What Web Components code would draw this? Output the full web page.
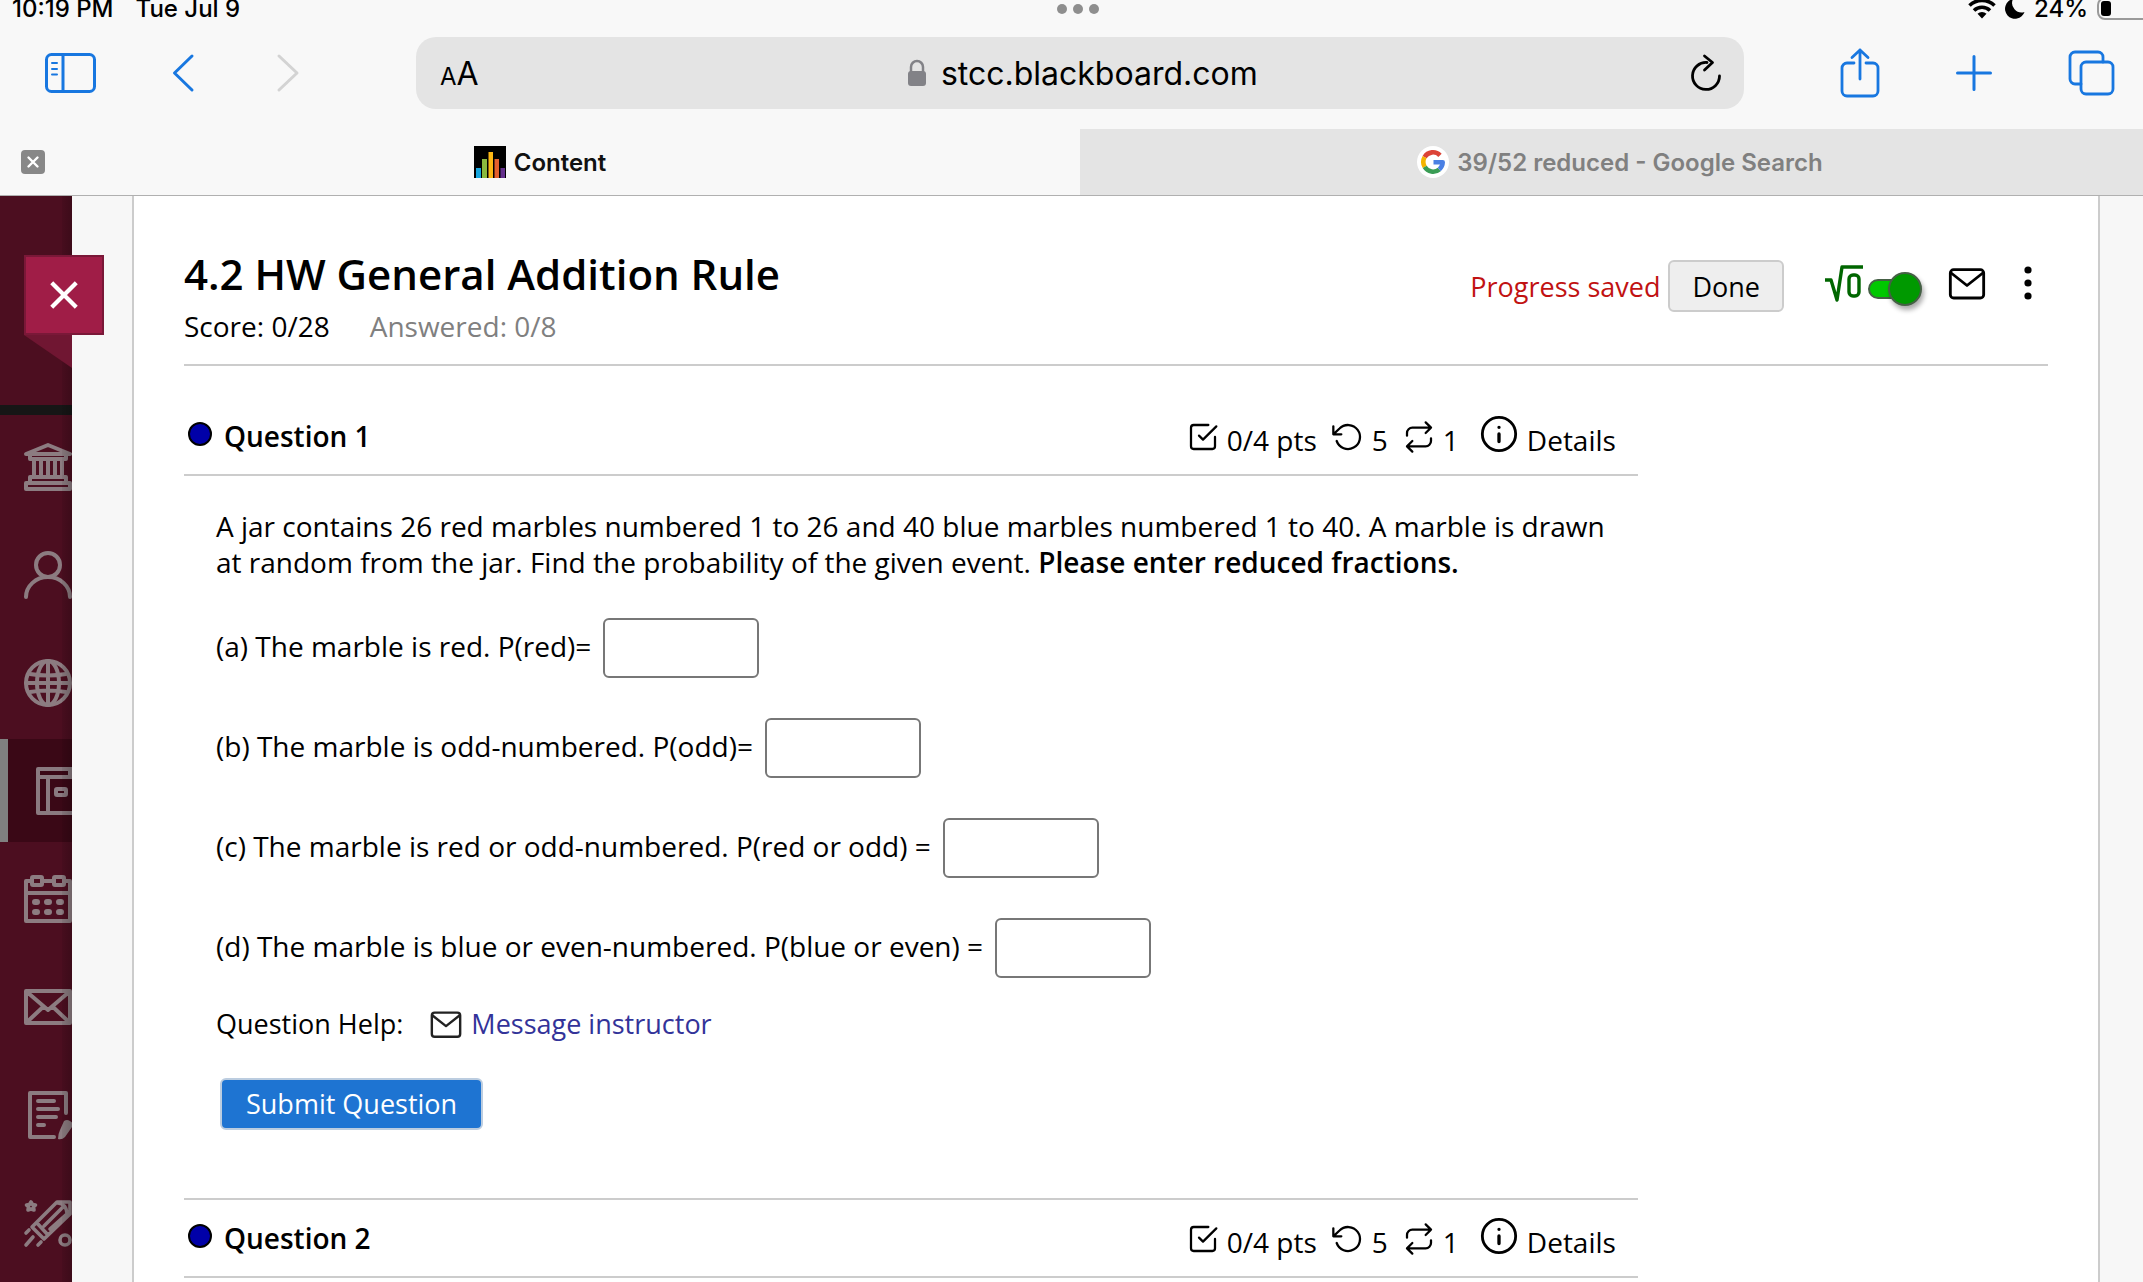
<!DOCTYPE html>
<html lang="en">
<head>
<meta charset="utf-8">
<title>Content</title>
<style>
  html, body { height: 100%; }
  body { margin: 0; overflow: hidden; background: #f7f7f7; font-family: "Open Sans", "Noto Sans", sans-serif; color: #000; }
</style>
</head>
<body>
<course-app></course-app>

<script>
const define = (name, html, setup) => {
  const tpl = document.createElement('template');
  tpl.innerHTML = `<style>*,*::before{box-sizing:border-box}button{font:inherit;color:inherit;border:0;background:none;padding:0;cursor:pointer}</style>` + html;
  customElements.define(name, class extends HTMLElement {
    constructor() {
      super();
      this.attachShadow({ mode: 'open' }).append(tpl.content.cloneNode(true));
    }
    connectedCallback() { if (setup) setup(this, this.shadowRoot); }
  });
};

/* Icons: viewBox + drawing, sized by the host's width and height */
const ICONS = {
  sidebar: ['0 0 52 40', '<g stroke-width="3"><rect x="1.5" y="1.5" width="48" height="37" rx="5"/><path d="M18 2v36"/><path stroke-width="2" d="M7 10h5M7 16h5M7 21.500h5"/></g>'],
  back: ['0 0 28 40', '<path stroke-width="3" d="M19 3 1.500 20 19 37"/>'],
  forward: ['0 0 28 40', '<path stroke-width="3" d="M2 3l18 17L2 37"/>'],
  lock: ['0 0 20 28', '<path stroke-width="2.500" d="M4 13V8a6 6 0 0 1 12 0v5"/><rect x="1" y="12" width="18" height="15" rx="3" fill="currentColor" stroke="none"/>'],
  reload: ['0 0 32 38', '<path stroke-width="2.800" d="M17 8.500A13.500 13.500 0 1 0 29.500 22"/><path stroke-width="2.800" d="M14.500 2l8 6.500-8 7.500"/>'],
  share: ['0 0 40 50', '<g stroke-width="2.800"><path d="M14 15H7a5 5 0 0 0-5 5v23a5 5 0 0 0 5 5h26a5 5 0 0 0 5-5V20a5 5 0 0 0-5-5h-7"/><path d="M20 31V2M12 9.500 20 2l8 7.500"/></g>'],
  plus: ['0 0 36 36', '<path stroke-width="3" d="M18 1.500v33M1.500 18h33"/>'],
  tabs: ['0 0 48 46', '<g stroke-width="2.800"><rect x="13" y="12" width="32" height="32" rx="5"/><path d="M13 34H7a5 5 0 0 1-5-5V7a5 5 0 0 1 5-5h23a5 5 0 0 1 5 5v5"/></g>'],
  wifi: ['0 0 28 20', '<g stroke-width="3.600" stroke-linecap="butt"><path d="M1.500 6.500a18 18 0 0 1 25 0"/><path d="M6 11.500a11.500 11.500 0 0 1 16 0"/></g><path fill="currentColor" stroke="none" d="M9.500 14.800a6.500 6.500 0 0 1 9 0L14 19.500z"/>'],
  moon: ['0 0 20 20', '<path fill="currentColor" stroke="none" d="M8 0A10 10 0 1 0 19.500 13 9.500 9.500 0 0 1 8 0z"/>'],
  battery: ['0 0 56 24', '<rect x="1" y="1" width="52" height="21" rx="7" stroke="#9a9a9a" stroke-width="2"/><rect x="4" y="4" width="10" height="15" rx="3" fill="#000" stroke="none"/>'],
  close: ['0 0 24 24', '<path stroke-width="2.400" d="M7.500 7.500l9 9m0-9l-9 9"/>'],
  cross: ['0 0 32 32', '<path stroke-width="4.500" stroke-linecap="square" d="M4.500 4.500l23 23m0-23l-23 23"/>'],
  chart: ['0 0 32 32', '<g stroke="none"><path fill="#000" d="M0 0h32v32H0z"/><path fill="#16a6de" d="M2 22h5v10H2z"/><path fill="#8ab93f" d="M8 13h5v19H8z"/><path fill="#fdb714" d="M14.500 6H19v26h-4.500z"/><path fill="#e5602c" d="M20.500 13H25v19h-4.500z"/><path fill="#64308c" d="M26.500 22H31v10h-4.500z"/></g>'],
  google: ['0 0 32 32', '<circle cx="16" cy="16" r="16" fill="#fff" stroke="none"/><g stroke-width="4.600" stroke-linecap="butt"><path stroke="#dc4437" d="M7.600 11.200A9.700 9.700 0 0 1 23 9.300"/><path stroke="#f4b400" d="M7.700 20.900a9.700 9.700 0 0 1-.1-9.700"/><path stroke="#3a9d55" d="M22.300 23.400A9.700 9.700 0 0 1 7.700 20.900"/><path stroke="#4a80e4" d="M16.500 16.300h9.200a9.700 9.700 0 0 1-3.400 7.100"/></g>'],
  bank: ['0 0 48 48', '<g stroke-width="4"><path d="M2 11 24 2l22 9v0H2z"/><path d="M6 12v4h36v-4M10 16v16M17 18v14M24 18v14M31 18v14M38 16v16M6 38v-4h36v4"/><rect x="2" y="40" width="44" height="6"/></g>'],
  user: ['0 0 48 48', '<g stroke-width="4"><circle cx="24" cy="14" r="12"/><path d="M2 46a22 20 0 0 1 44 0"/></g>'],
  globe: ['0 0 48 48', '<g stroke-width="4"><circle cx="24" cy="24" r="22"/><ellipse cx="24" cy="24" rx="11" ry="22"/><path d="M24 2v44M2 24h44M6 15q18 3 36 0M6 33q18-3 36 0"/></g>'],
  courses: ['0 0 48 48', '<g stroke-width="4"><rect x="2" y="2" width="44" height="44"/><path d="M2 10h32V2M12 10v36M34 10h12"/><rect x="20" y="22" width="10" height="6" rx="1"/></g>'],
  calendar: ['0 0 48 48', '<g stroke-width="4"><path d="M8 6H2v40h44V6h-6M18 6h12M2 18h44"/><rect x="8" y="2" width="10" height="8" rx="1"/><rect x="30" y="2" width="10" height="8" rx="1"/></g><path stroke-width="6" d="M11 27h2m10 0h2m10 0h2M11 37h2m10 0h2m10 0h2"/>'],
  envelope: ['0 0 48 48', '<g stroke-width="4"><path d="M2 8h44v32H2zM3 9l21 18L45 9M3 39l16-15M45 39 29 24"/></g>'],
  grades: ['0 0 48 48', '<g stroke-width="4"><path d="M42 22V2H6v44h24M14 10h16M14 18h20M14 26h18M14 34h6"/></g><path fill="currentColor" stroke="none" d="M40 30q3-2 6 0l4 3-9 13q-3 3-7 2 0-5 2-9z"/>'],
  tools: ['0 0 48 48', '<g stroke-width="3.600"><path d="M8 28 33 3h13v12L20 40zM13 24l11 12M20 27 38 9M26 30 44 14M34 4q8 1 9 10M2 34l3-3M2 46l7-8M14 46l3-3"/><circle cx="41" cy="41" r="5"/><path d="M7 3l1.500 2.500 3 .5-2 2 .5 3-3-1-3 1 .5-3-2-2 3-.5z"/></g>'],
  mail: ['0 0 24 24', '<rect x="2" y="4" width="20" height="17" rx="2"/><path d="M2.500 6 12 13.500 21.500 6"/>'],
  check: ['0 0 24 24', '<path d="m9 11 3 3L22 4M21 12v7a2 2 0 0 1-2 2H5a2 2 0 0 1-2-2V5a2 2 0 0 1 2-2h11"/>'],
  undo: ['0 0 24 24', '<path d="M1 4v6h6M3.510 15a9 9 0 1 0 2.130-9.360L1 10"/>'],
  repeat: ['0 0 24 24', '<path d="m17 1 4 4-4 4M3 11V9a4 4 0 0 1 4-4h14M7 23l-4-4 4-4M21 13v2a4 4 0 0 1-4 4H3"/>'],
  info: ['0 0 24 24', '<circle cx="12" cy="12" r="10"/><path stroke-width="2" d="M12 16.500V12M12 8h.010"/>'],
  root: ['0 0 40 40', '<g stroke-width="3.400"><path stroke-linecap="butt" d="M1 17h6l6 20L18 4h21"/><rect x="25" y="12" width="10" height="21" rx="4"/></g>'],
  kebab: ['0 0 12 40', '<g fill="currentColor" stroke="none"><circle cx="6" cy="7" r="3.600"/><circle cx="6" cy="20" r="3.600"/><circle cx="6" cy="33" r="3.600"/></g>']
};
define('ui-icon', `
<style>:host{display:block;flex:none}svg{display:block;width:100%;height:100%;overflow:visible}</style>
<svg fill="none" stroke="currentColor" stroke-width="1.7" stroke-linecap="round" stroke-linejoin="round" aria-hidden="true"></svg>`,
(host, root) => {
  const [box, art] = ICONS[host.getAttribute('name')];
  const svg = root.querySelector('svg');
  svg.setAttribute('viewBox', box);
  svg.innerHTML = art;
});

define('status-bar', `
<style>
  :host{display:grid;grid-template-columns:1fr auto 1fr;grid-template-rows:18px;align-items:center;padding-left:12px;font-size:24px;line-height:18px;font-weight:500}
  .left{display:flex;gap:22px}
  .dots{display:flex;gap:6px}
  .dots i{width:10px;height:10px;border-radius:50%;background:#8e8e8e}
  .right{display:flex;justify-content:flex-end;align-items:center;gap:9px}
  .wifi{width:28px;height:20px}.moon{width:20px;height:20px}.bat{width:46px;height:24px;overflow:hidden}
  .bat ui-icon{width:56px;height:24px}
</style>
<div class="left"><span>10:19 PM</span><span>Tue Jul 9</span></div>
<div class="dots"><i></i><i></i><i></i></div>
<div class="right"><ui-icon class="wifi" name="wifi"></ui-icon><ui-icon class="moon" name="moon"></ui-icon><span>24%</span><div class="bat"><ui-icon name="battery"></ui-icon></div></div>`);

define('tool-bar', `
<style>
  :host{display:flex;align-items:center;padding:19px 27px 20px 45px;color:#1877e0}
  .group{display:flex;align-items:center;gap:76px}
  .side ui-icon{width:52px;height:40px}.nav ui-icon{width:28px;height:40px}
  .off{color:#d3d3d3}
  .url{flex:1;display:flex;align-items:center;justify-content:space-between;height:72px;margin:0 96px 0 111px;padding:0 22px 0 24px;border-radius:20px;background:#e4e4e4;color:#000}
  .aa{font-size:32px}.aa small{font-size:24px}
  .host{display:flex;align-items:center;gap:14px;padding-right:4px;font-size:32px}
  .host ui-icon{width:20px;height:28px;color:#828287}
  .reload{width:32px;height:38px}
  .share ui-icon{width:40px;height:50px}.plus ui-icon{width:36px;height:36px}.tabs ui-icon{width:48px;height:46px}
</style>
<div class="group">
  <button class="side" aria-label="Sidebar"><ui-icon name="sidebar"></ui-icon></button>
  <button class="nav" aria-label="Back"><ui-icon name="back"></ui-icon></button>
  <button class="nav off" aria-label="Forward"><ui-icon name="forward"></ui-icon></button>
</div>
<div class="url">
  <button class="aa"><small>A</small>A</button>
  <button class="host"><ui-icon name="lock"></ui-icon><span>stcc.blackboard.com</span></button>
  <button aria-label="Reload"><ui-icon class="reload" name="reload"></ui-icon></button>
</div>
<div class="group">
  <button class="share" aria-label="Share"><ui-icon name="share"></ui-icon></button>
  <button class="plus" aria-label="New tab"><ui-icon name="plus"></ui-icon></button>
  <button class="tabs" aria-label="Tabs"><ui-icon name="tabs"></ui-icon></button>
</div>`);

define('browser-tab', `
<style>
  :host{display:flex;flex:1;align-items:center;height:66px;padding:0 21px;background:#e4e4e4;color:#808080;font-size:24px;font-weight:600}
  :host([active]){background:#f8f8f8;color:#111}
  .x{display:none;width:24px;height:24px;border-radius:4px;background:#888;color:#fff}
  :host([active]) .x{display:block}
  .x ui-icon{width:24px;height:24px}
  .name{flex:1;display:flex;align-items:center;justify-content:center;gap:8px}
  .name ui-icon{width:32px;height:32px}
  :host([active]) .name{padding-right:24px}
</style>
<button class="x" aria-label="Close tab"><ui-icon name="close"></ui-icon></button>
<button class="name"><slot></slot></button>`,
(host, root) => {
  const icon = document.createElement('ui-icon');
  icon.setAttribute('name', host.getAttribute('icon'));
  root.querySelector('.name').prepend(icon);
});

define('browser-chrome', `
<style>
  :host{display:block;background:#f8f8f8;border-bottom:1px solid #b0b0b0;font-family:Inter,sans-serif;color:#000}
  .strip{display:flex;margin-right:-17px}
</style>
<status-bar></status-bar>
<tool-bar></tool-bar>
<div class="strip">
  <browser-tab icon="chart" active>Content</browser-tab>
  <browser-tab icon="google">39/52 reduced - Google Search</browser-tab>
</div>`);

define('course-sidebar', `
<style>
  :host{display:block;position:relative;z-index:1;width:72px;flex:none;background:#4c0e20}
  .clip{height:100%;overflow:hidden}
  .brand{height:219px;border-bottom:10px solid #161616}
  nav{display:flex;flex-direction:column;gap:5px}
  nav a{display:flex;align-items:center;flex:none;height:103px;padding-left:24px;color:#8c7c81}
  nav a.on{background:#3a0816;border-left:8px solid #808080;padding-left:28px;color:#8a7a80}
  nav ui-icon{width:48px;height:48px}
  .shade{position:absolute;top:0;right:0;bottom:0;width:10px;background:linear-gradient(90deg,#0001,#0003)}
  .fold{position:absolute;left:24px;top:139px;width:48px;height:33px;background:#701632;clip-path:polygon(0 0,100% 0,100% 100%)}
  .close{position:absolute;left:24px;top:59px;width:80px;height:80px;background:#a01d47;border:2px solid #7a1838;color:#fff;display:grid;place-items:center}
  .close ui-icon{width:30px;height:30px}
</style>
<div class="clip">
  <div class="brand"></div>
  <nav>
    <a href="#" aria-label="Institution"><ui-icon name="bank"></ui-icon></a>
    <a href="#" aria-label="Profile"><ui-icon name="user"></ui-icon></a>
    <a href="#" aria-label="Activity"><ui-icon name="globe"></ui-icon></a>
    <a href="#" aria-label="Courses" class="on"><ui-icon name="courses"></ui-icon></a>
    <a href="#" aria-label="Calendar"><ui-icon name="calendar"></ui-icon></a>
    <a href="#" aria-label="Messages"><ui-icon name="envelope"></ui-icon></a>
    <a href="#" aria-label="Grades"><ui-icon name="grades"></ui-icon></a>
    <a href="#" aria-label="Tools"><ui-icon name="tools"></ui-icon></a>
  </nav>
</div>
<div class="shade"></div>
<div class="fold"></div>
<button class="close" aria-label="Close"><ui-icon name="cross"></ui-icon></button>`);

define('toggle-switch', `
<style>
  :host{display:flex}
  input{appearance:none;margin:0;width:44px;height:20px;border:2px solid #456045;border-radius:10px;background:#00c800;display:flex;align-items:center;justify-content:flex-end}
  input::before{content:"";flex:none;width:34px;height:34px;margin-right:-12px;border:2px solid #456045;border-radius:50%;background:#090;box-shadow:2px 4px 5px #0005}
</style>
<input type="checkbox" checked aria-label="Equation editor">`);

define('assessment-header', `
<style>
  :host{display:flex;justify-content:space-between;align-items:flex-start;padding:52px 0 20px;border-bottom:2px solid #ccc}
  h1{margin:0 0 8px;font-size:42px;line-height:52px;font-weight:600}
  .score{display:flex;gap:40px;font-size:28px;line-height:36px}
  .muted{color:#808080}
  .tools{display:flex;align-items:center;padding:12px 14px 0 0;font-size:27px}
  .saved{color:#c11212;margin-right:8px}
  .done{height:52px;padding:0 22px;border:2px solid #ccc;border-radius:6px;background:#eee}
  .root{width:40px;height:40px;margin:0 4px 6px 40px;color:#060}
  toggle-switch{padding-top:6px}
  .mail{width:40px;height:40px}
  .mailb{margin:0 35px 6px 35px}
  .more{margin-bottom:6px}
  .kebab{width:12px;height:40px}
</style>
<div>
  <h1>4.2 HW General Addition Rule</h1>
  <div class="score"><span>Score: 0/28</span><span class="muted">Answered: 0/8</span></div>
</div>
<div class="tools">
  <span class="saved">Progress saved</span>
  <button class="done">Done</button>
  <ui-icon class="root" name="root"></ui-icon>
  <toggle-switch></toggle-switch>
  <button class="mailb" aria-label="Message"><ui-icon class="mail" name="mail"></ui-icon></button>
  <button class="more" aria-label="More"><ui-icon class="kebab" name="kebab"></ui-icon></button>
</div>`);

define('question-card', `
<style>
  :host{display:block}
  header{display:flex;justify-content:space-between;align-items:center;height:78px;padding:0 22px 4px 4px;border-bottom:2px solid #ccc;font-size:28px;line-height:36px}
  .t,.meta{display:flex;align-items:center}
  .dot{width:24px;height:24px;border:2px solid #000;border-radius:50%;background:#0000a8;margin-right:12px}
  h2{margin:0;padding-top:4px;font-size:28px;line-height:32px;font-weight:600}
  .meta span{padding-top:12px}
  .meta ui-icon{width:32px;height:32px;margin:6px 8px 0 15px}
  .meta .info{width:40px;height:40px;margin:0}
  .details{display:flex;align-items:center;gap:8px;margin-left:20px}
</style>
<header>
  <div class="t"><i class="dot"></i><h2><slot name="title"></slot></h2></div>
  <div class="meta">
    <ui-icon name="check"></ui-icon><span>0/4 pts</span>
    <ui-icon name="undo"></ui-icon><span>5</span>
    <ui-icon name="repeat"></ui-icon><span>1</span>
    <button class="details"><ui-icon class="info" name="info"></ui-icon><span>Details</span></button>
  </div>
</header>
<slot></slot>`);

define('answer-field', `
<style>
  :host{display:flex;align-items:center;gap:12px;font-size:28px;line-height:36px}
  label{padding-bottom:4px}
  input{width:156px;height:60px;padding:0 12px;border:2px solid #777;border-radius:6px;background:#fff;font:inherit}
</style>
<label for="a"><slot></slot></label><input id="a" type="text">`);

define('question-body', `
<style>
  :host{display:flex;flex-direction:column;align-items:flex-start;padding:32px 0 68px 32px;border-bottom:2px solid #ccc;font-size:27px;line-height:36px}
  p{margin:0 0 38px;font-size:28px;white-space:nowrap}
  b{font-weight:600}
  .answers{display:flex;flex-direction:column;gap:40px}
  .help{display:flex;align-items:center;margin:28px 0 36px}
  .help ui-icon{width:34px;height:34px;margin:0 8px 0 26px;color:#222}
  a{color:#339;text-decoration:none}
  .submit{height:52px;margin-left:4px;padding:0 24px;border:2px solid #bccde0;border-radius:6px;background:#1e74d2;color:#fff}
</style>
<p>A jar contains 26 red marbles numbered 1 to 26 and 40 blue marbles numbered 1 to 40. A marble is drawn<br>at random from the jar. Find the probability of the given event. <b>Please enter reduced fractions.</b></p>
<div class="answers">
  <answer-field>(a) The marble is red. P(red)=</answer-field>
  <answer-field>(b) The marble is odd-numbered. P(odd)=</answer-field>
  <answer-field>(c) The marble is red or odd-numbered. P(red or odd) =</answer-field>
  <answer-field>(d) The marble is blue or even-numbered. P(blue or even) =</answer-field>
</div>
<div class="help"><span>Question Help:</span><ui-icon name="mail"></ui-icon><a href="#">Message instructor</a></div>
<button class="submit">Submit Question</button>`);

define('assessment-panel', `
<style>
  :host{display:block;flex:1;margin:0 43px 0 60px;padding:0 50px;background:#fff;border:solid #ccc;border-width:0 2px}
  .list{width:78%;padding-top:32px}
</style>
<assessment-header></assessment-header>
<div class="list">
  <question-card><span slot="title">Question 1</span><question-body></question-body></question-card>
  <question-card><span slot="title">Question 2</span></question-card>
</div>`);

define('course-app', `
<style>
  :host{display:flex;flex-direction:column;height:100vh;overflow:hidden}
  main{flex:1;display:flex;min-height:0}
</style>
<browser-chrome></browser-chrome>
<main><course-sidebar></course-sidebar><assessment-panel></assessment-panel></main>`);
</script>
</body>
</html>
